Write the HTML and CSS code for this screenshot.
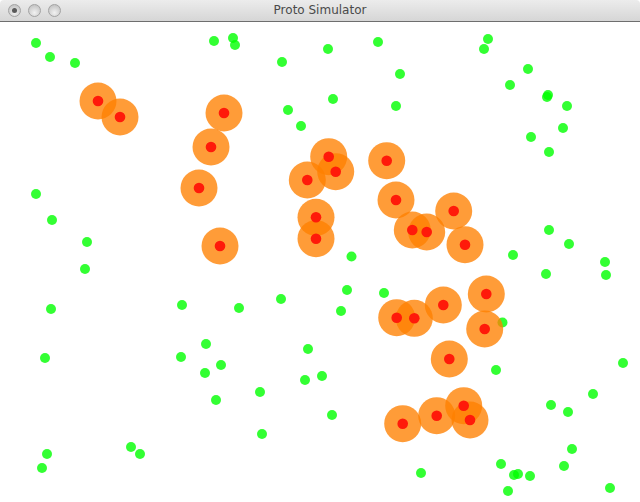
FILE: index.html
```html
<!DOCTYPE html>
<html>
<head>
<meta charset="utf-8">
<title>Proto Simulator</title>
<link rel="stylesheet" href="styles.css">
</head>
<body>
<div class="window">
  <div class="titlebar">
    <div class="lights">
      <span class="light light-close"></span>
      <span class="light"></span>
      <span class="light"></span>
    </div>
    <div class="title">Proto Simulator</div>
    <div class="spacer"></div>
  </div>
  <svg class="canvas" width="640" height="480" viewBox="0 22 640 480" xmlns="http://www.w3.org/2000/svg">
    <g class="green">
      <circle cx="36" cy="43" r="5"/>
      <circle cx="50" cy="57" r="5"/>
      <circle cx="75" cy="63" r="5"/>
      <circle cx="214" cy="41" r="5"/>
      <circle cx="233" cy="38" r="5"/>
      <circle cx="235" cy="45" r="5"/>
      <circle cx="328" cy="49" r="5"/>
      <circle cx="378" cy="42" r="5"/>
      <circle cx="488" cy="39" r="5"/>
      <circle cx="484" cy="49" r="5"/>
      <circle cx="282" cy="62" r="5"/>
      <circle cx="400" cy="74" r="5"/>
      <circle cx="528" cy="69" r="5"/>
      <circle cx="510" cy="85" r="5"/>
      <circle cx="548" cy="95" r="5"/>
      <circle cx="547" cy="97" r="5"/>
      <circle cx="567" cy="106" r="5"/>
      <circle cx="333" cy="99" r="5"/>
      <circle cx="396" cy="106" r="5"/>
      <circle cx="288" cy="110" r="5"/>
      <circle cx="301" cy="126" r="5"/>
      <circle cx="563" cy="128" r="5"/>
      <circle cx="531" cy="137" r="5"/>
      <circle cx="549" cy="152" r="5"/>
      <circle cx="36" cy="194" r="5"/>
      <circle cx="52" cy="220" r="5"/>
      <circle cx="87" cy="242" r="5"/>
      <circle cx="85" cy="269" r="5"/>
      <circle cx="549" cy="230" r="5"/>
      <circle cx="569" cy="244" r="5"/>
      <circle cx="513" cy="255" r="5"/>
      <circle cx="605" cy="262" r="5"/>
      <circle cx="606" cy="275" r="5"/>
      <circle cx="546" cy="274" r="5"/>
      <circle cx="351.5" cy="256.5" r="5"/>
      <circle cx="347" cy="290" r="5"/>
      <circle cx="384" cy="293" r="5"/>
      <circle cx="281" cy="299" r="5"/>
      <circle cx="341" cy="311" r="5"/>
      <circle cx="182" cy="305" r="5"/>
      <circle cx="239" cy="308" r="5"/>
      <circle cx="51" cy="309" r="5"/>
      <circle cx="502.5" cy="322.5" r="5"/>
      <circle cx="206" cy="344" r="5"/>
      <circle cx="181" cy="357" r="5"/>
      <circle cx="45" cy="358" r="5"/>
      <circle cx="221" cy="365" r="5"/>
      <circle cx="205" cy="373" r="5"/>
      <circle cx="308" cy="349" r="5"/>
      <circle cx="305" cy="380" r="5"/>
      <circle cx="322" cy="376" r="5"/>
      <circle cx="496" cy="370" r="5"/>
      <circle cx="623" cy="363" r="5"/>
      <circle cx="260" cy="392" r="5"/>
      <circle cx="216" cy="400" r="5"/>
      <circle cx="332" cy="415" r="5"/>
      <circle cx="551" cy="405" r="5"/>
      <circle cx="568" cy="412" r="5"/>
      <circle cx="593" cy="394" r="5"/>
      <circle cx="262" cy="434" r="5"/>
      <circle cx="131" cy="447" r="5"/>
      <circle cx="140" cy="454" r="5"/>
      <circle cx="47" cy="454" r="5"/>
      <circle cx="42" cy="468" r="5"/>
      <circle cx="421" cy="473" r="5"/>
      <circle cx="572" cy="449" r="5"/>
      <circle cx="564" cy="466" r="5"/>
      <circle cx="501" cy="464" r="5"/>
      <circle cx="514" cy="475" r="5"/>
      <circle cx="518" cy="474" r="5"/>
      <circle cx="530" cy="476" r="5"/>
      <circle cx="508" cy="491" r="5"/>
      <circle cx="610" cy="488" r="5"/>
    </g>
    <g class="halo">
      <circle cx="98" cy="101" r="18.5"/>
      <circle cx="120" cy="117" r="18.5"/>
      <circle cx="224" cy="113" r="18.5"/>
      <circle cx="211" cy="147" r="18.5"/>
      <circle cx="199" cy="188" r="18.5"/>
      <circle cx="220" cy="246" r="18.5"/>
      <circle cx="328.7" cy="156.7" r="18.5"/>
      <circle cx="335.7" cy="171.7" r="18.5"/>
      <circle cx="307.3" cy="180" r="18.5"/>
      <circle cx="316" cy="217.3" r="18.5"/>
      <circle cx="316" cy="238.7" r="18.5"/>
      <circle cx="386.7" cy="160.7" r="18.5"/>
      <circle cx="396" cy="200" r="18.5"/>
      <circle cx="412.3" cy="230" r="18.5"/>
      <circle cx="426.7" cy="232" r="18.5"/>
      <circle cx="453.7" cy="211" r="18.5"/>
      <circle cx="465" cy="244.7" r="18.5"/>
      <circle cx="486.3" cy="294" r="18.5"/>
      <circle cx="484.7" cy="329" r="18.5"/>
      <circle cx="443.3" cy="305" r="18.5"/>
      <circle cx="396.7" cy="317.7" r="18.5"/>
      <circle cx="414.3" cy="318.3" r="18.5"/>
      <circle cx="449.3" cy="359" r="18.5"/>
      <circle cx="402.7" cy="423.7" r="18.5"/>
      <circle cx="436.7" cy="415.7" r="18.5"/>
      <circle cx="463.7" cy="405.7" r="18.5"/>
      <circle cx="470" cy="420" r="18.5"/>
    </g>
    <g class="core">
      <circle cx="98" cy="101" r="5.3"/>
      <circle cx="120" cy="117" r="5.3"/>
      <circle cx="224" cy="113" r="5.3"/>
      <circle cx="211" cy="147" r="5.3"/>
      <circle cx="199" cy="188" r="5.3"/>
      <circle cx="220" cy="246" r="5.3"/>
      <circle cx="328.7" cy="156.7" r="5.3"/>
      <circle cx="335.7" cy="171.7" r="5.3"/>
      <circle cx="307.3" cy="180" r="5.3"/>
      <circle cx="316" cy="217.3" r="5.3"/>
      <circle cx="316" cy="238.7" r="5.3"/>
      <circle cx="386.7" cy="160.7" r="5.3"/>
      <circle cx="396" cy="200" r="5.3"/>
      <circle cx="412.3" cy="230" r="5.3"/>
      <circle cx="426.7" cy="232" r="5.3"/>
      <circle cx="453.7" cy="211" r="5.3"/>
      <circle cx="465" cy="244.7" r="5.3"/>
      <circle cx="486.3" cy="294" r="5.3"/>
      <circle cx="484.7" cy="329" r="5.3"/>
      <circle cx="443.3" cy="305" r="5.3"/>
      <circle cx="396.7" cy="317.7" r="5.3"/>
      <circle cx="414.3" cy="318.3" r="5.3"/>
      <circle cx="449.3" cy="359" r="5.3"/>
      <circle cx="402.7" cy="423.7" r="5.3"/>
      <circle cx="436.7" cy="415.7" r="5.3"/>
      <circle cx="463.7" cy="405.7" r="5.3"/>
      <circle cx="470" cy="420" r="5.3"/>
    </g>
  </svg>
</div>
</body>
</html>
```
FILE: styles.css
```css
html, body {
  margin: 0;
  padding: 0;
  background: #ffffff;
}
.window {
  width: 640px;
  height: 502px;
  display: flex;
  flex-direction: column;
  overflow: hidden;
  border-radius: 4px 4px 0 0;
}
.titlebar {
  height: 21px;
  flex: none;
  display: grid;
  grid-template-columns: 1fr auto 1fr;
  align-items: center;
  background: linear-gradient(#ececec, #d6d6d6);
  border-bottom: 1px solid #6e6e6e;
  font-family: "DejaVu Sans", "Liberation Sans", sans-serif;
}
.lights {
  display: flex;
  gap: 7px;
  padding-left: 8px;
  align-items: center;
}
.light {
  width: 13px;
  height: 13px;
  border-radius: 50%;
  box-sizing: border-box;
  border: 1px solid #a2a2a2;
  background: radial-gradient(circle at 50% 70%, #f2f2f2 0%, #d8d8d8 45%, #b9b9b9 100%);
  display: flex;
  align-items: center;
  justify-content: center;
}
.light-close::after {
  content: "";
  width: 5px;
  height: 5px;
  border-radius: 50%;
  background: #5a5a5a;
}
.title {
  font-size: 12px;
  color: #4a4a4a;
  letter-spacing: 0;
  line-height: 21px;
}
.canvas {
  display: block;
  flex: none;
}
.green circle {
  fill: rgba(0, 255, 0, 0.8);
}
.halo circle {
  fill: rgba(255, 128, 0, 0.78);
}
.core circle {
  fill: #ff1a0a;
}
```
